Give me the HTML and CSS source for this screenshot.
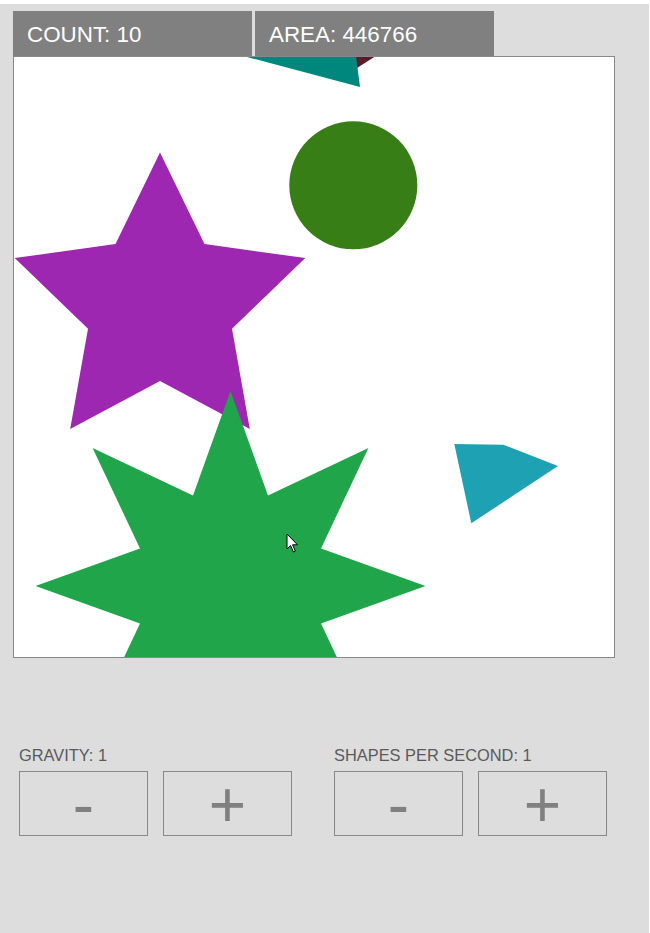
FILE: index.html
```html
<!DOCTYPE html>
<html>
<head>
<meta charset="utf-8">
<title>Shapes</title>
<link rel="stylesheet" href="styles.css">
</head>
<body>
<div class="panel">
  <div class="tabs">
    <div class="tab">COUNT: 10</div>
    <div class="tab">AREA: 446766</div>
  </div>
  <div class="canvas">
    <svg class="scene" width="600" height="600" viewBox="14 57 600 600" xmlns="http://www.w3.org/2000/svg">
      <polygon fill="#5b1b2b" points="340,30 390,47 357,68"/>
      <polygon fill="#00877d" points="183,40 354,40 360,87"/>
      <circle fill="#377e17" cx="353.3" cy="185.3" r="64"/>
      <polygon fill="#1ea2b3" points="454.3,444 503.3,444.7 558,466 471.3,523.3"/>
      <polygon fill="#9d27b0" points="160,152.5 204.5,244.1 305.3,258.1 232,328.7 249.8,428.9 160,381 70.2,428.9 88,328.7 14.7,258.1 115.5,244.1"/>
      <polygon fill="#21a54a" points="230.5,391 268,495.5 368.4,448.1 321,548.5 425.5,586 321,623.5 368.4,723.9 268,676.5 230.5,781 193,676.5 92.6,723.9 140,623.5 35.5,586 140,548.5 92.6,448.1 193,495.5"/>
      <path fill="#ffffff" stroke="#000000" stroke-width="1" stroke-linejoin="round" d="M287,534 L287,549 L290.6,545.6 L293.4,552 L295.3,551.2 L292.6,544.8 L297.5,544.8 Z"/>
    </svg>
  </div>
  <div class="controls">
    <div class="group">
      <div class="label">GRAVITY: 1</div>
      <div class="buttons">
        <button class="btn">-</button>
        <button class="btn">+</button>
      </div>
    </div>
    <div class="group">
      <div class="label">SHAPES PER SECOND: 1</div>
      <div class="buttons">
        <button class="btn">-</button>
        <button class="btn">+</button>
      </div>
    </div>
  </div>
</div>
</body>
</html>
```
FILE: styles.css
```css
html, body {
  margin: 0;
  padding: 0;
  background: #ffffff;
}

body {
  font-family: "Liberation Sans", Arial, sans-serif;
}

.panel {
  box-sizing: border-box;
  margin-top: 4px;
  width: 649px;
  min-height: 929px;
  background: #dddddd;
  padding: 7px 0 0 13px;
}

.tabs {
  display: flex;
  gap: 3px;
  height: 45px;
}

.tab {
  box-sizing: border-box;
  width: 239px;
  height: 45px;
  background: #808080;
  color: #ffffff;
  font-size: 22.4px;
  padding: 2px 0 0 14px;
  display: flex;
  align-items: center;
}

.canvas {
  width: 600px;
  height: 600px;
  border: 1px solid #888888;
  background: #ffffff;
}

.scene {
  display: block;
}

.controls {
  display: flex;
  gap: 42px;
  margin-top: 87px;
  padding-left: 6px;
}

.group {
  display: flex;
  flex-direction: column;
  gap: 7px;
}

.label {
  font-size: 16.4px;
  line-height: 18px;
  padding-top: 1px;
  color: #5a5a5a;
}

.buttons {
  display: flex;
  gap: 15px;
}

.btn {
  box-sizing: border-box;
  width: 129px;
  height: 65px;
  margin: 0;
  padding: 2px 0 0 0;
  border: 1px solid #888888;
  background: transparent;
  color: #808080;
  font-family: "Liberation Sans", Arial, sans-serif;
  font-size: 64px;
  line-height: 1;
  display: flex;
  align-items: center;
  justify-content: center;
}
```
